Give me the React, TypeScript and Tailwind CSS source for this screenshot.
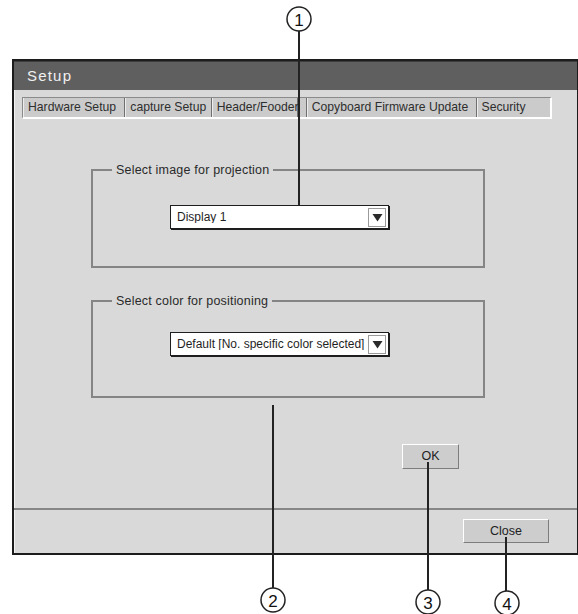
import React from "react";

const font = "font-['Liberation_Sans',Arial,sans-serif]";

function Dropdown({ label }: { label: string }) {
  return (
    <div className="flex h-[24px] w-[219px] items-center border border-[#1e1e1e] bg-white pl-[6px] pr-[2px] shadow-[1px_1px_0_#1e1e1e]">
      <span className="flex-1 truncate text-[12px] leading-none text-[#1f1f1f]">{label}</span>
      <div className="flex h-[19px] w-[18px] items-center justify-center border border-[#9a9a9a] bg-white">
        <svg width="11" height="9" viewBox="0 0 11 9">
          <polygon points="0.5,1 10.5,1 5.5,8.5" fill="#2a2a2a" />
        </svg>
      </div>
    </div>
  );
}

function Group({ title, children, h }: { title: string; children: React.ReactNode; h: string }) {
  return (
    <fieldset className={`ml-[77px] w-[394px] ${h} border-2 border-[#858585] px-0`}>
      <legend className="ml-[19px] px-[4px] text-[12.5px] leading-[14px] tracking-[0.2px] text-[#2a2a2a]">
        {title}
      </legend>
      {children}
    </fieldset>
  );
}

const tabs: { label: string; w: string; extra?: string }[] = [
  { label: "Hardware Setup", w: "w-[102px]", extra: "" },
  { label: "capture Setup", w: "w-[87px]", extra: "border-l border-[#6f6f6f]" },
  { label: "Header/Fooder", w: "w-[87px]", extra: "border-l border-r border-[#6f6f6f]" },
  { label: "Copyboard Firmware Update", w: "w-[171px]", extra: "ml-[8px] border-l border-[#6f6f6f]" },
  { label: "Security", w: "w-[75px]", extra: "border-l border-[#6f6f6f]" },
];

export default function App() {
  return (
    <div className={`relative h-[614px] w-[578px] overflow-hidden bg-white ${font}`}>
      <div className="pt-[59px] pl-[12px]">
        <div className="flex h-[496px] w-[567px] flex-col border-2 border-[#1c1c1c] bg-[#d9d9d9] shadow-[inset_1px_0_0_#f2f2f2]">
          <div className="flex h-[29px] items-center border-t border-[#3d3d3d] bg-[#5f5f5f] pl-[13px] pt-[1px] text-[15px] tracking-[1.2px] text-[#f0f0f0]">
            Setup
          </div>
          <div className="flex flex-1 flex-col pt-[7px]">
            <div className="ml-[8px] flex h-[22px] w-[530px] border-l border-t border-[#8a8a8a] border-b-2 border-r-2 border-b-white border-r-white bg-[#cbcbcb]">
              {tabs.map((t) => (
                <div
                  key={t.label}
                  className={`flex h-full items-center whitespace-nowrap pl-[5px] text-[12.2px] leading-none text-[#2e2e2e] ${t.w} ${t.extra} shadow-[inset_1px_0_0_#ededed]`}
                >
                  {t.label}
                </div>
              ))}
            </div>

            <div className="mt-[44px]">
              <Group title="Select image for projection" h="h-[105px]">
                <div className="ml-[77px] mt-[28px]">
                  <Dropdown label="Display 1" />
                </div>
              </Group>
            </div>

            <div className="mt-[26px]">
              <Group title="Select color for positioning" h="h-[104px]">
                <div className="ml-[77px] mt-[24px]">
                  <Dropdown label="Default [No. specific color selected]" />
                </div>
              </Group>
            </div>

            <div className="ml-[388px] mt-[46px] flex h-[25px] w-[57px] items-center justify-center border border-t-white border-l-white border-b-[#7d7d7d] border-r-[#7d7d7d] bg-[#cdcdcd] text-[12.5px] text-[#222]">
              OK
            </div>

            <div className="mt-[39px] border-t-2 border-[#878787]" />

            <div className="ml-[449px] mt-[9px] flex h-[24px] w-[86px] items-center justify-center border border-t-white border-l-white border-b-[#7d7d7d] border-r-[#7d7d7d] bg-[#cdcdcd] text-[12.5px] text-[#222]">
              Close
            </div>
          </div>
        </div>
      </div>

      <svg
        className="pointer-events-none absolute left-0 top-0"
        width="578"
        height="614"
        viewBox="0 0 578 614"
      >
        <g stroke="#222" strokeWidth="2" fill="none">
          <line x1="299" y1="31" x2="299" y2="206" />
          <line x1="273" y1="405" x2="273" y2="588" />
          <line x1="428" y1="462" x2="428" y2="590" />
          <line x1="506" y1="537" x2="506" y2="591" />
        </g>
        <g stroke="#222" strokeWidth="1.5" fill="white">
          <circle cx="299" cy="19" r="12" />
          <circle cx="273" cy="600" r="12" />
          <circle cx="428" cy="602" r="12" />
          <circle cx="507" cy="603" r="12" />
        </g>
        <g fill="#111" fontFamily="'Liberation Sans', Arial, sans-serif" fontSize="17" textAnchor="middle">
          <text x="299" y="25.5">1</text>
          <text x="273" y="606.5">2</text>
          <text x="428" y="608.5">3</text>
          <text x="507" y="609.5">4</text>
        </g>
      </svg>
    </div>
  );
}
